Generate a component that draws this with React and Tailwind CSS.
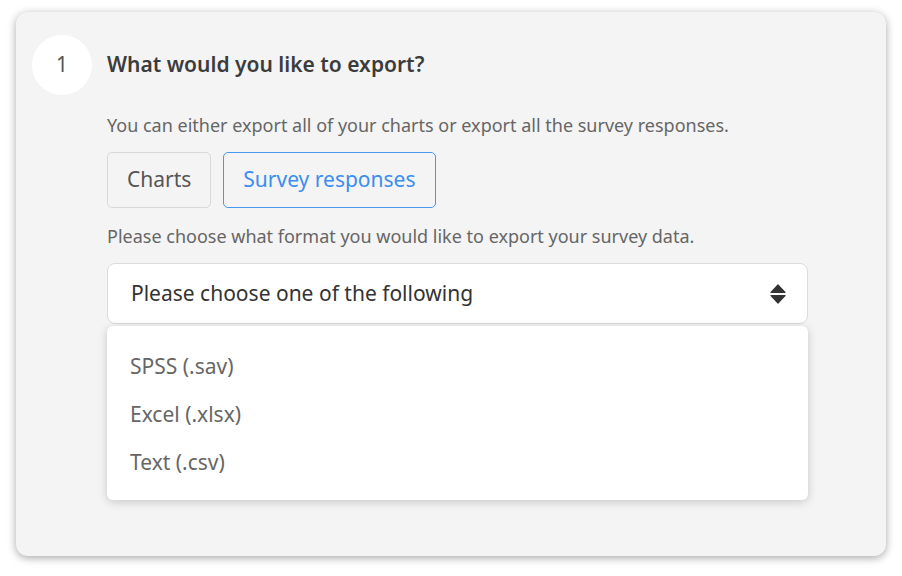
import React from "react";

function SortIcon() {
  return (
    <svg width="16" height="20" viewBox="0 0 16 20" className="shrink-0">
      <path d="M8 1 L15 8.5 L1 8.5 Z" fill="#333" strokeLinejoin="round" stroke="#333" strokeWidth="1.2" />
      <path d="M8 19 L15 11.5 L1 11.5 Z" fill="#333" strokeLinejoin="round" stroke="#333" strokeWidth="1.2" />
    </svg>
  );
}

export default function App() {
  return (
    <div className="w-[902px] h-[576px] bg-white pt-[12px] pl-[16px]" style={{ fontFamily: '"Noto Sans", "Open Sans", sans-serif' }}>
      <div className="w-[870px] h-[544px] bg-[#f4f4f4] rounded-[12px] shadow-[0_2px_8px_rgba(0,0,0,0.35)] pl-[16px] pt-[23px] flex">
        <div className="w-[60px] h-[60px] rounded-full bg-white flex items-center justify-center text-[21px] text-[#555] shrink-0">1</div>
        <div className="ml-[15px] w-[701px] flex flex-col">
          <div className="h-[60px] flex items-center text-[21px] font-semibold text-[#3c3c3c]">What would you like to export?</div>
          <div className="mt-[18px] text-[18px] text-[#666] leading-[24px]">You can either export all of your charts or export all the survey responses.</div>
          <div className="mt-[15px] flex gap-[12px]">
            <button className="h-[56px] px-[19px] rounded-[5px] border border-[#d9d9d9] text-[21px] text-[#555]">Charts</button>
            <button className="h-[56px] px-[19px] rounded-[5px] border border-[#4a98ee] text-[21px] text-[#3a8ef0]">Survey responses</button>
          </div>
          <div className="mt-[16px] text-[18px] text-[#666] leading-[24px]">Please choose what format you would like to export your survey data.</div>
          <div className="mt-[15px] h-[61px] bg-white rounded-[8px] border border-[#dcdcdc] flex items-center justify-between pl-[23px] pr-[21px] text-[21px] text-[#333]">
            <span>Please choose one of the following</span>
            <SortIcon />
          </div>
          <div className="mt-[2px] h-[174px] bg-white rounded-[6px] shadow-[0_2px_10px_rgba(0,0,0,0.18)] pt-[17px] pl-[23px] flex flex-col text-[21px] text-[#666]">
            <div className="h-[48px] flex items-center">SPSS (.sav)</div>
            <div className="h-[48px] flex items-center">Excel (.xlsx)</div>
            <div className="h-[48px] flex items-center">Text (.csv)</div>
          </div>
        </div>
      </div>
    </div>
  );
}
